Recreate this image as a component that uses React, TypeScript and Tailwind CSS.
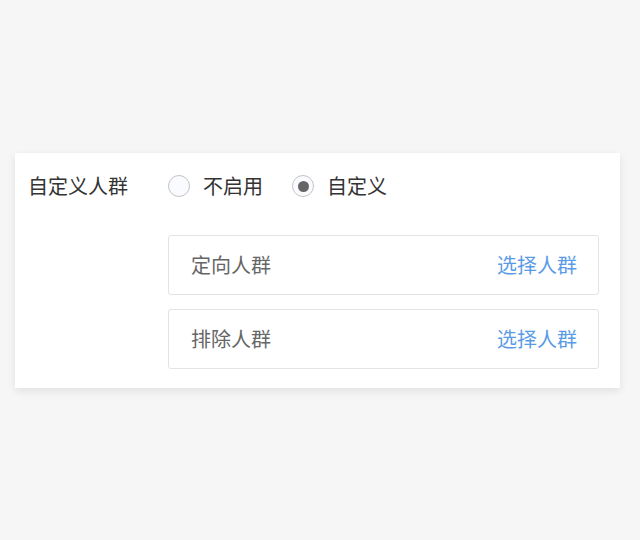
import React from "react";

function Radio({ checked }: { checked?: boolean }) {
  return (
    <span className="flex h-[22px] w-[22px] items-center justify-center rounded-full border border-[#c4c4c4] bg-[#f9fbfe]">
      {checked && <span className="h-[11px] w-[11px] rounded-full bg-[#666666]" />}
    </span>
  );
}

function Box({ label }: { label: string }) {
  return (
    <div className="flex h-[60px] items-center justify-between rounded-[3px] border border-[#e3e3e3] pl-[22px] pr-[21px]">
      <span className="text-[20px] leading-none text-[#666666]">{label}</span>
      <span className="text-[20px] leading-none text-[#5a9be6]">选择人群</span>
    </div>
  );
}

export default function App() {
  return (
    <div
      className="min-h-[540px] w-[640px] bg-[#f6f6f6] pt-[153px]"
      style={{ fontFamily: '"Noto Sans CJK SC", "Noto Sans", sans-serif' }}
    >
      <div className="ml-[15px] flex w-[605px] bg-white pb-[19px] pl-[13px] pr-[21px] pt-[20px] shadow-[0_3px_8px_rgba(0,0,0,0.09)]">
        <div className="flex h-[26px] w-[140px] shrink-0 items-center text-[20px] leading-none text-[#333333]">
          自定义人群
        </div>
        <div className="flex flex-1 flex-col">
          <div className="flex h-[26px] items-center">
            <Radio />
            <span className="ml-[13px] text-[20px] leading-none text-[#333333]">不启用</span>
            <span className="ml-[29px]">
              <Radio checked />
            </span>
            <span className="ml-[13px] text-[20px] leading-none text-[#333333]">自定义</span>
          </div>
          <div className="mt-[36px] flex flex-col gap-[14px]">
            <Box label="定向人群" />
            <Box label="排除人群" />
          </div>
        </div>
      </div>
    </div>
  );
}
